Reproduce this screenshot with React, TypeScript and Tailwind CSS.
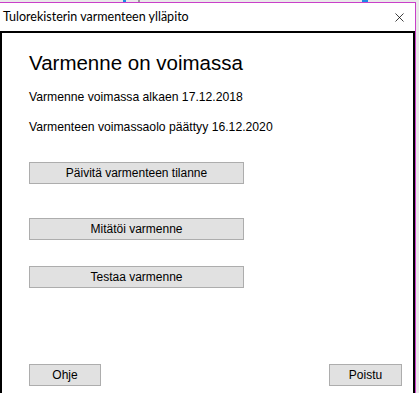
import { X } from "lucide-react";

type WinButtonProps = {
  label: string;
  className?: string;
};

function WinButton({ label, className = "" }: WinButtonProps) {
  return (
    <button
      type="button"
      className={`h-[22px] border border-[#adadad] bg-[#e1e1e1] text-[12px] leading-none text-black ${className}`}
    >
      {label}
    </button>
  );
}

export default function App() {
  return (
    <div className="flex h-[393px] w-[419px] flex-col overflow-hidden bg-[#e9e9e9] font-['Liberation_Sans',Arial,sans-serif]">
      {/* bits of the window behind */}
      <div className="relative h-[2px] shrink-0">
        <div className="absolute left-[123px] top-0 h-[2px] w-[3px] bg-[#1e88e5]" />
        <div className="absolute left-[138px] top-0 h-[2px] w-[2px] bg-[#9a9a9a]" />
        <div className="absolute left-[362px] top-0 h-[2px] w-[6px] bg-[#1e88e5]" />
      </div>

      <div className="flex w-[416px] flex-1 flex-col border-r border-t border-[#c940c9] bg-white">
        <div className="flex h-[28px] shrink-0 items-center justify-between pl-[3px] pr-[8px]">
          <span className="font-['Lato',sans-serif] text-[12.5px] text-black">
            Tulorekisterin varmenteen ylläpito
          </span>
          <X size={15} strokeWidth={1.2} className="text-black" />
        </div>

        <div className="flex flex-1 flex-col border-l-2 border-r-2 border-t-2 border-black pl-[27px] pr-[11px]">
          <h1 className="mt-[18px] text-[20.5px] leading-[24px] text-black">Varmenne on voimassa</h1>
          <p className="mt-[15px] text-[12.2px] leading-[14px] text-black">
            Varmenne voimassa alkaen 17.12.2018
          </p>
          <p className="mt-[16px] text-[12.2px] leading-[14px] text-black">
            Varmenteen voimassaolo päättyy 16.12.2020
          </p>

          <div className="mt-[28px] flex flex-col gap-[34px]">
            <WinButton label="Päivitä varmenteen tilanne" className="w-[215px]" />
            <WinButton label="Mitätöi varmenne" className="w-[215px]" />
          </div>
          <WinButton label="Testaa varmenne" className="mt-[26px] w-[215px]" />

          <div className="mt-auto mb-[7px] flex justify-between">
            <WinButton label="Ohje" className="w-[72px]" />
            <WinButton label="Poistu" className="w-[73px]" />
          </div>
        </div>
      </div>
    </div>
  );
}
